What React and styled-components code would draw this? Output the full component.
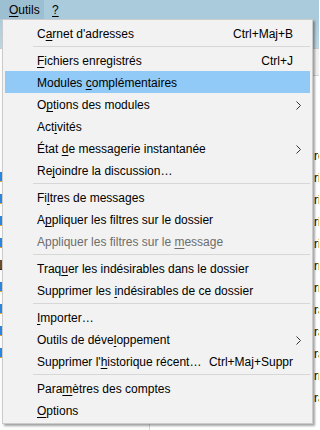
import React from 'react';
import styled, { createGlobalStyle } from 'styled-components';

const Global = createGlobalStyle`
  html, body { margin: 0; padding: 0; background: #fff; }
  #root { width: 319px; height: 430px; }
`;

const Page = styled.div`
  position: relative;
  width: 319px;
  height: 430px;
  overflow: hidden;
  background: #fff;
  display: flex;
  flex-direction: column;
  font-family: "Liberation Sans", Arial, sans-serif;
  font-size: 12px;
  color: #000;
`;

const MenuBar = styled.div`
  height: 19px;
  flex-shrink: 0;
  background: #aacbdc;
  display: flex;
  align-items: stretch;
`;

const BarItem = styled.div`
  display: flex;
  align-items: center;
  padding: 1px ${p => (p.$open ? '7px' : '4px')} 0 ${p => (p.$open ? '9px' : '8px')};
  background: ${p => (p.$open ? '#9dbfd2' : 'transparent')};
  width: ${p => (p.$open ? '44px' : 'auto')};
  box-sizing: border-box;
  line-height: 18px;
`;

const Key = styled.span`
  text-decoration: underline;
  text-underline-offset: 2px;
  text-decoration-thickness: 1px;
`;

const Toolbar = styled.div`
  height: 29px;
  flex-shrink: 0;
  background: linear-gradient(#aacbdc, #bcd6e3);
  border-bottom: 1px solid #c4ccd2;
`;

const Main = styled.div`
  flex: 1;
  display: grid;
  grid-template-columns: 150px 1fr;
`;

const FolderPane = styled.div`
  background: #fbfbfb;
  border-right: 1px solid #d6d6d6;
  display: flex;
  flex-direction: column;
  padding-top: 117px;
`;

const FolderRow = styled.div`
  height: 22px;
  display: flex;
  align-items: center;
`;

const FolderIcon = styled.span`
  width: 3px;
  height: 9px;
  background: ${p => (p.$dark ? '#6b4b2a' : '#2a86dc')};
  border-bottom: 1px solid ${p => (p.$dark ? '#3a2a1a' : '#e0a040')};
`;

const ThreadPane = styled.div`
  display: flex;
  flex-direction: column;
`;

const ThreadHeader = styled.div`
  height: 26px;
  background: #f0f0f0;
  border-bottom: 1px solid #d5d5d5;
`;

const ThreadList = styled.div`
  padding-top: 69px;
  display: flex;
  flex-direction: column;
`;

const ThreadRow = styled.div`
  height: 22px;
  line-height: 22px;
  padding-left: 164px;
  white-space: nowrap;
  color: #111;
`;

const Menu = styled.div`
  position: absolute;
  left: 2px;
  top: 19px;
  width: 311px;
  box-sizing: border-box;
  background: #f2f2f2;
  border: 1px solid #cbcbcb;
  box-shadow: 2px 2px 2px rgba(0, 0, 0, 0.35);
  padding: 2px;
  display: flex;
  flex-direction: column;
`;

const Item = styled.div`
  height: 22px;
  box-sizing: border-box;
  display: flex;
  align-items: center;
  padding: 2px 9px 0 32px;
  background: ${p => (p.$active ? '#91c9f7' : 'transparent')};
  color: ${p => (p.$disabled ? '#6d6d6d' : '#000')};
  white-space: nowrap;
`;

const Label = styled.span`
  flex: 1;
`;

const Shortcut = styled.span`
  padding-right: 8px;
`;

const Separator = styled.div`
  height: 5px;
  display: flex;
  align-items: center;
  padding-left: 28px;

  &::after {
    content: '';
    flex: 1;
    height: 1px;
    background: #d7d7d7;
  }
`;

const Chevron = () => (
  <svg width="5" height="9" viewBox="0 0 5 9">
    <path d="M0.5 0.5 L4.5 4.5 L0.5 8.5" fill="none" stroke="#333" strokeWidth="1" />
  </svg>
);

function Text({ t, k }) {
  if (k == null) return <>{t}</>;
  return (
    <>
      {t.slice(0, k)}
      <Key>{t[k]}</Key>
      {t.slice(k + 1)}
    </>
  );
}

const items = [
  { t: "Carnet d'adresses", k: 1, sc: 'Ctrl+Maj+B' },
  { sep: true },
  { t: 'Fichiers enregistrés', k: 0, sc: 'Ctrl+J' },
  { t: 'Modules complémentaires', k: 8, active: true },
  { t: 'Options des modules', k: 1, sub: true },
  { t: 'Activités', k: 3 },
  { t: 'État de messagerie instantanée', k: 5, sub: true },
  { t: 'Rejoindre la discussion…', k: 2 },
  { sep: true },
  { t: 'Filtres de messages', k: 2 },
  { t: 'Appliquer les filtres sur le dossier', k: 1 },
  { t: 'Appliquer les filtres sur le message', k: 29, disabled: true },
  { sep: true },
  { t: 'Traquer les indésirables dans le dossier', k: 4 },
  { t: 'Supprimer les indésirables de ce dossier', k: 14 },
  { sep: true },
  { t: 'Importer…', k: 0 },
  { t: 'Outils de développement', k: 14, sub: true },
  { t: "Supprimer l'historique récent…", k: 12, sc: 'Ctrl+Maj+Suppr' },
  { sep: true },
  { t: 'Paramètres des comptes', k: 4 },
  { t: 'Options', k: 0 },
];

const folders = [false, false, false, false, true, false, false, false, false];
const threads = ['re', 'ri', 'ri', 'ri', 'ri', 'rn', 'rn', 'ra', 'ra', 'ra', 'rn', 'ra'];

export default function App() {
  return (
    <>
      <Global />
      <Page>
        <MenuBar>
          <BarItem $open>
            <Key>O</Key>utils
          </BarItem>
          <BarItem>
            <Key>?</Key>
          </BarItem>
        </MenuBar>
        <Toolbar />
        <Main>
          <FolderPane>
            {folders.map((d, i) => (
              <FolderRow key={i}>
                <FolderIcon $dark={d} />
              </FolderRow>
            ))}
          </FolderPane>
          <ThreadPane>
            <ThreadHeader />
            <ThreadList>
              {threads.map((t, i) => (
                <ThreadRow key={i}>{t}</ThreadRow>
              ))}
            </ThreadList>
          </ThreadPane>
        </Main>
        <Menu>
          {items.map((it, i) =>
            it.sep ? (
              <Separator key={i} />
            ) : (
              <Item key={i} $active={it.active} $disabled={it.disabled}>
                <Label>
                  <Text t={it.t} k={it.k} />
                </Label>
                {it.sc && <Shortcut>{it.sc}</Shortcut>}
                {it.sub && <Chevron />}
              </Item>
            )
          )}
        </Menu>
      </Page>
    </>
  );
}
